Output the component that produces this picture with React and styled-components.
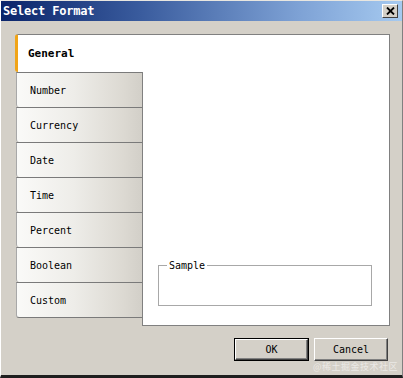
import React from 'react'
import styled, { createGlobalStyle } from 'styled-components'

const GlobalStyle = createGlobalStyle`
  html, body {
    margin: 0;
    padding: 0;
    background: #d4d0c8;
  }
`;

const mono = `"DejaVu Sans Mono", "Liberation Mono", monospace`;

const Window = styled.div`
  position: relative;
  width: 403px;
  height: 378px;
  box-sizing: border-box;
  background: #d4d0c8;
  border-top: 1px solid #e8e6e0;
  border-left: 1px solid #ffffff;
  border-right: 1px solid #808080;
  border-bottom: 3px solid #1e1e1e;
  display: flex;
  flex-direction: column;
  font-family: ${mono};
`;

const TitleBar = styled.div`
  height: 20px;
  display: flex;
  align-items: center;
  justify-content: space-between;
  padding: 0 4px 0 2px;
  background: linear-gradient(to right, #0a246a 0%, #3a5c9e 35%, #7fa3d6 75%, #a6caf0 100%);
`;

const Title = styled.span`
  color: #ffffff;
  font-size: 12px;
  font-weight: bold;
  letter-spacing: -0.2px;
`;

const CloseButton = styled.div`
  width: 16px;
  height: 14px;
  box-sizing: border-box;
  background: #d4d0c8;
  border-top: 1px solid #ffffff;
  border-left: 1px solid #ffffff;
  border-right: 1px solid #404040;
  border-bottom: 1px solid #404040;
  display: flex;
  align-items: center;
  justify-content: center;
`;

const Body = styled.div`
  flex: 1;
  padding: 13px 12px 0 14px;
  display: flex;
  flex-direction: column;
`;

const Main = styled.div`
  display: flex;
  align-items: flex-start;
`;

const TabColumn = styled.div`
  width: 127px;
  display: flex;
  flex-direction: column;
`;

const ActiveTab = styled.div`
  position: relative;
  z-index: 1;
  height: 37px;
  margin-right: -1px;
  background: #ffffff;
  border-top: 1px solid #808080;
  border-left: 3px solid #f0a418;
  border-radius: 3px 0 0 3px;
  display: flex;
  align-items: center;
  padding-left: 10px;
  font-size: 11px;
  font-weight: bold;
  color: #000;
`;

const Tab = styled.div`
  height: 34px;
  margin-left: 1px;
  border-top: 1px solid #7a7a7a;
  border-left: 1px solid #a8a8a8;
  border-bottom: ${({ $last }) => ($last ? '1px solid #7a7a7a' : 'none')};
  border-radius: 0 0 0 3px;
  background: linear-gradient(to right, #fafaf8 0%, #eeede9 45%, #dcd9d2 85%, #d2cfc8 100%);
  display: flex;
  align-items: center;
  padding-left: 13px;
  font-size: 10px;
  color: #000;
`;

const Panel = styled.div`
  width: 248px;
  height: 292px;
  box-sizing: border-box;
  background: #ffffff;
  border: 1px solid #808080;
  display: flex;
  flex-direction: column;
  justify-content: flex-end;
  padding: 0 17px 19px 15px;
`;

const SampleBox = styled.fieldset`
  margin: 0;
  height: 46px;
  box-sizing: border-box;
  border: 1px solid #a8a8a8;
  padding: 0 6px;
`;

const SampleLegend = styled.legend`
  padding: 0 2px;
  margin-left: 2px;
  font-family: ${mono};
  font-size: 10px;
  color: #000;
`;

const Footer = styled.div`
  display: flex;
  justify-content: flex-end;
  gap: 5px;
  margin-top: 12px;
  padding-right: 2px;
`;

const Button = styled.button`
  width: ${({ $w }) => $w}px;
  height: 23px;
  box-sizing: border-box;
  background: #d4d0c8;
  font-family: ${mono};
  font-size: 10px;
  color: #000;
  padding: 0;
  border-top: 1px solid #ffffff;
  border-left: 1px solid #ffffff;
  border-right: 1px solid #404040;
  border-bottom: 1px solid #404040;
  box-shadow: ${({ $default }) =>
    $default
      ? '0 0 0 1px #000, inset -1px -1px 0 #808080'
      : 'inset -1px -1px 0 #808080'};
  margin: ${({ $default }) => ($default ? '1px' : '0')};
  ${({ $default, $w }) => ($default ? `width: ${$w - 2}px; height: 21px;` : '')}
`;

const Watermark = styled.div`
  position: absolute;
  right: 4px;
  bottom: 2px;
  font-family: "Noto Sans CJK SC", sans-serif;
  font-size: 9px;
  color: rgba(255, 255, 255, 0.55);
  letter-spacing: 0.5px;
`;

const tabs = ['Number', 'Currency', 'Date', 'Time', 'Percent', 'Boolean', 'Custom'];

export default function App() {
  return (
    <>
      <GlobalStyle />
      <Window>
        <TitleBar>
          <Title>Select Format</Title>
          <CloseButton>
            <svg width="9" height="8" viewBox="0 0 9 8">
              <path d="M1 0.5 L8 7.5 M8 0.5 L1 7.5" stroke="#000" strokeWidth="1.8" />
            </svg>
          </CloseButton>
        </TitleBar>
        <Body>
          <Main>
            <TabColumn>
              <ActiveTab>General</ActiveTab>
              {tabs.map((t, i) => (
                <Tab key={t} $last={i === tabs.length - 1}>{t}</Tab>
              ))}
            </TabColumn>
            <Panel>
              <SampleBox>
                <SampleLegend>Sample</SampleLegend>
              </SampleBox>
            </Panel>
          </Main>
          <Footer>
            <Button $w={75} $default>OK</Button>
            <Button $w={74}>Cancel</Button>
          </Footer>
        </Body>
        <Watermark>@稀土掘金技术社区</Watermark>
      </Window>
    </>
  )
}
